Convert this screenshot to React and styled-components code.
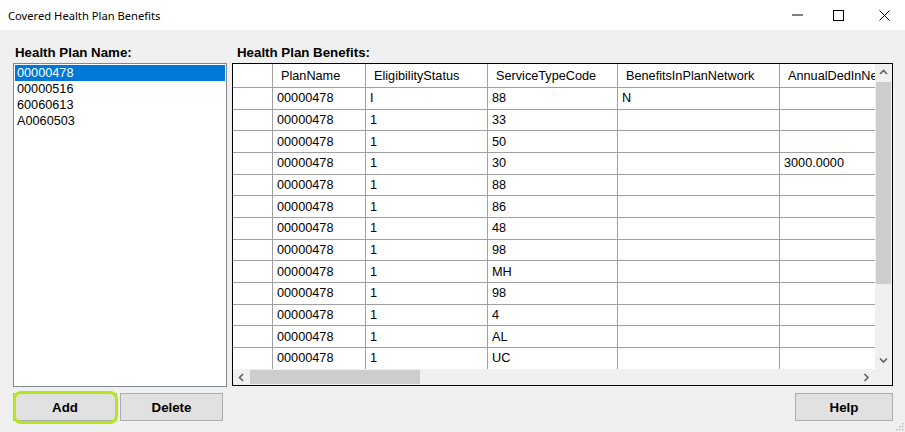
import React from "react";
import styled, { createGlobalStyle } from "styled-components";

const Global = createGlobalStyle`
  html, body { margin: 0; padding: 0; background: #f0f0f0; }
  * { box-sizing: border-box; }
`;

const Window = styled.div`
  width: 905px;
  height: 432px;
  background: #f0f0f0;
  display: flex;
  flex-direction: column;
  position: relative;
  overflow: hidden;
  font-family: "Liberation Sans", Arial, sans-serif;
  color: #000;
`;

const TitleBar = styled.div`
  height: 30px;
  flex: none;
  background: #fff;
  display: flex;
  align-items: center;
  padding-left: 8px;
`;

const Title = styled.div`
  font-family: "Noto Sans", "Open Sans", sans-serif;
  font-size: 11.2px;
  color: #000;
`;

const Controls = styled.div`
  margin-left: auto;
  margin-right: -2px;
  display: flex;
  height: 100%;
`;

const ControlButton = styled.div`
  width: 46px;
  height: 100%;
  display: flex;
  align-items: center;
  justify-content: center;
  padding-left: ${(p) => p.$shift || 0}px;
`;

const Content = styled.div`
  display: grid;
  grid-template-columns: 214px 661px;
  grid-template-rows: 21px 324px 28px;
  column-gap: 5px;
  padding: 12px 0 0 13px;
`;

const Label = styled.div`
  font-weight: bold;
  font-size: 13.3px;
  line-height: 21px;
  padding-left: ${(p) => p.$indent || 2}px;
`;

const ListBox = styled.div`
  background: #fff;
  border: 1px solid #828790;
  padding: 1px;
`;

const ListItem = styled.div`
  height: 16px;
  line-height: 16px;
  font-size: 12.7px;
  padding-left: 2px;
  background: ${(p) => (p.$selected ? "#0078d7" : "transparent")};
  color: ${(p) => (p.$selected ? "#fff" : "#000")};
`;

const GridFrame = styled.div`
  height: 323px;
  border: 1px solid #000;
  background: #fff;
  display: grid;
  grid-template-columns: 1fr 17px;
  grid-template-rows: 1fr 16px;
`;

const Viewport = styled.div`
  overflow: hidden;
  background: #fff;
`;

const Row = styled.div`
  display: flex;
  height: ${(p) => (p.$header ? "24px" : "21.67px")};
  border-bottom: 1px solid #a0a0a0;
  width: max-content;
`;

const Cell = styled.div`
  flex: none;
  width: ${(p) => p.$w}px;
  border-right: 1px solid #a0a0a0;
  font-size: 12.7px;
  display: flex;
  align-items: center;
  padding-left: ${(p) => (p.$header ? 8 : 4)}px;
  padding-top: ${(p) => (p.$header ? 1 : 0)}px;
  white-space: nowrap;
  overflow: hidden;
`;

const VScroll = styled.div`
  background: #f0f0f0;
  display: flex;
  flex-direction: column;
`;

const HScroll = styled.div`
  background: #f0f0f0;
  display: flex;
  align-items: stretch;
`;

const ArrowBox = styled.div`
  flex: none;
  width: 17px;
  height: ${(p) => (p.$horizontal ? "100%" : "17px")};
  display: flex;
  align-items: center;
  justify-content: center;
`;

const VThumb = styled.div`
  height: 202px;
  margin: 1px 1px 0 1px;
  background: #cdcdcd;
`;

const HThumb = styled.div`
  width: 170px;
  margin: 1px 0;
  background: #cdcdcd;
`;

const Spacer = styled.div`
  flex: 1;
`;

const Corner = styled.div`
  background: #f0f0f0;
`;

const ButtonRow = styled.div`
  display: flex;
  gap: 3px;
  margin-top: 6px;
  justify-content: ${(p) => (p.$right ? "flex-end" : "flex-start")};
`;

const Button = styled.div`
  position: relative;
  width: ${(p) => p.$w}px;
  height: 28px;
  background: #e1e1e1;
  border: 1px solid #adadad;
  display: flex;
  align-items: center;
  justify-content: center;
  font-weight: bold;
  font-size: 13.3px;
`;

const Highlight = styled.div`
  position: absolute;
  top: -3px;
  left: -1px;
  right: -2px;
  bottom: -4px;
  border: 3px solid #b5e61d;
  border-radius: 8px;
`;

const Grip = styled.svg`
  position: absolute;
  right: 1px;
  bottom: 1px;
`;

const Chevron = ({ dir }) => {
  const paths = {
    up: "M1 5 L4.5 1.5 L8 5",
    down: "M1 1.5 L4.5 5 L8 1.5",
    left: "M5 1 L1.5 4.5 L5 8",
    right: "M1.5 1 L5 4.5 L1.5 8",
  };
  const horiz = dir === "left" || dir === "right";
  return (
    <svg width={horiz ? 7 : 9} height={horiz ? 9 : 7} viewBox={horiz ? "0 0 7 9" : "0 0 9 7"}>
      <path d={paths[dir]} fill="none" stroke="#606060" strokeWidth="1.6" />
    </svg>
  );
};

const widths = [40, 93, 122, 130, 162, 140];
const headers = ["", "PlanName", "EligibilityStatus", "ServiceTypeCode", "BenefitsInPlanNetwork", "AnnualDedInNetwork"];
const rows = [
  ["00000478", "I", "88", "N", ""],
  ["00000478", "1", "33", "", ""],
  ["00000478", "1", "50", "", ""],
  ["00000478", "1", "30", "", "3000.0000"],
  ["00000478", "1", "88", "", ""],
  ["00000478", "1", "86", "", ""],
  ["00000478", "1", "48", "", ""],
  ["00000478", "1", "98", "", ""],
  ["00000478", "1", "MH", "", ""],
  ["00000478", "1", "98", "", ""],
  ["00000478", "1", "4", "", ""],
  ["00000478", "1", "AL", "", ""],
  ["00000478", "1", "UC", "", ""],
];

const plans = ["00000478", "00000516", "60060613", "A0060503"];

export default function App() {
  return (
    <>
      <Global />
      <Window>
        <TitleBar>
          <Title>Covered Health Plan Benefits</Title>
          <Controls>
            <ControlButton $shift={10}>
              <svg width="11" height="2" viewBox="0 0 11 2">
                <line x1="0" y1="1" x2="11" y2="1" stroke="#000" strokeWidth="1" />
              </svg>
            </ControlButton>
            <ControlButton>
              <svg width="11" height="11" viewBox="0 0 11 11">
                <rect x="0.5" y="0.5" width="10" height="10" fill="none" stroke="#000" strokeWidth="1" />
              </svg>
            </ControlButton>
            <ControlButton>
              <svg width="11" height="11" viewBox="0 0 11 11">
                <path d="M0.5 0.5 L10.5 10.5 M10.5 0.5 L0.5 10.5" stroke="#000" strokeWidth="1" />
              </svg>
            </ControlButton>
          </Controls>
        </TitleBar>
        <Content>
          <Label>Health Plan Name:</Label>
          <Label $indent={5}>Health Plan Benefits:</Label>
          <ListBox>
            {plans.map((p, i) => (
              <ListItem key={p} $selected={i === 0}>{p}</ListItem>
            ))}
          </ListBox>
          <GridFrame>
            <Viewport>
              <Row $header>
                {headers.map((h, i) => (
                  <Cell key={i} $w={widths[i]} $header>{h}</Cell>
                ))}
              </Row>
              {rows.map((r, ri) => (
                <Row key={ri}>
                  <Cell $w={widths[0]} />
                  {r.map((v, ci) => (
                    <Cell key={ci} $w={widths[ci + 1]}>{v}</Cell>
                  ))}
                </Row>
              ))}
            </Viewport>
            <VScroll>
              <ArrowBox><Chevron dir="up" /></ArrowBox>
              <VThumb />
              <Spacer />
              <ArrowBox><Chevron dir="down" /></ArrowBox>
            </VScroll>
            <HScroll>
              <ArrowBox $horizontal><Chevron dir="left" /></ArrowBox>
              <HThumb />
              <Spacer />
              <ArrowBox $horizontal><Chevron dir="right" /></ArrowBox>
            </HScroll>
            <Corner />
          </GridFrame>
          <ButtonRow>
            <Button $w={104}>
              Add
              <Highlight />
            </Button>
            <Button $w={103}>Delete</Button>
          </ButtonRow>
          <ButtonRow $right>
            <Button $w={98}>Help</Button>
          </ButtonRow>
        </Content>
        <Grip width="8" height="8" viewBox="0 0 8 8">
          <rect x="6" y="0" width="1.5" height="1.5" fill="#bbb" />
          <rect x="3" y="3" width="1.5" height="1.5" fill="#bbb" />
          <rect x="6" y="3" width="1.5" height="1.5" fill="#bbb" />
          <rect x="0" y="6" width="1.5" height="1.5" fill="#bbb" />
          <rect x="3" y="6" width="1.5" height="1.5" fill="#bbb" />
          <rect x="6" y="6" width="1.5" height="1.5" fill="#bbb" />
        </Grip>
      </Window>
    </>
  );
}
